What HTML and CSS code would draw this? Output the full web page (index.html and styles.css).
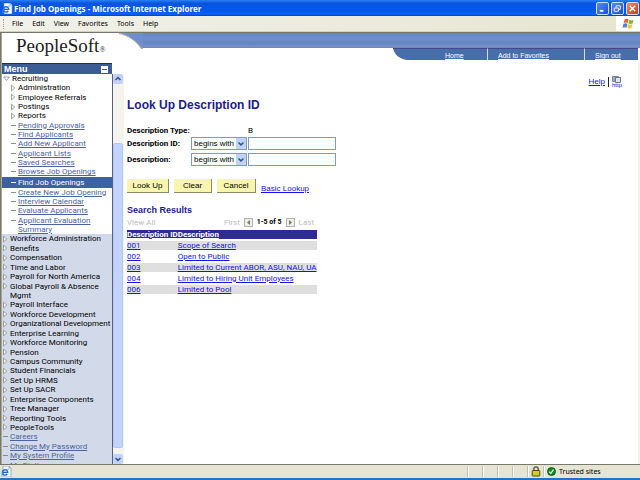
FILE: index.html
```html
<!DOCTYPE html>
<html lang="en">
<head>
  <meta charset="UTF-8" />
  <meta name="viewport" content="width=device-width, initial-scale=1.0" />
  <title>Find Job Openings</title>
  <link rel="stylesheet" href="styles.css">
</head>
<body>
  <svg class="defs" width="0" height="0" aria-hidden="true">
    <symbol id="ie" viewBox="0 0 11 11">
      <path d="M2 0h6l2 2v9H2z" fill="#fff" stroke="#7f93b8" stroke-width=".7"/>
      <path d="M8 0v2h2" fill="#c9d6ee" stroke="#7f93b8" stroke-width=".6"/>
      <path d="M1.6 6.4h5.2a2.7 2.7 0 1 0-.5 1.6" fill="none" stroke="#1c66d2" stroke-width="1.4"/>
      <path d="M.6 9.6C0 7 4 3 8.300 3" fill="none" stroke="#3aa0ee" stroke-width=".8"/>
    </symbol>
    <symbol id="closed" viewBox="0 0 5 8">
      <path d="M.5 1.200v5.600L3.800 4z" fill="#fff" stroke="#8a8a7c" stroke-width=".8"/>
    </symbol>
    <symbol id="open" viewBox="0 0 7 8">
      <path d="M.6 2h5.800L3.500 5.500z" fill="#fff" stroke="#8a8a7c" stroke-width=".8"/>
    </symbol>
    <symbol id="chevron" viewBox="0 0 10 10">
      <path d="M2.500 4 5 6.400 7.500 4" fill="none" stroke="#3c5482" stroke-width="1.500"/>
    </symbol>
  </svg>

  <header class="titlebar">
    <svg class="ie-icon" width="11" height="11"><use href="#ie"/></svg>
    <span class="window-title">Find Job Openings - Microsoft Internet Explorer</span>
    <div class="window-buttons">
      <button class="win-btn" aria-label="Minimize"><svg viewBox="0 0 12 12"><path d="M3 8.500h4" stroke="#fff" stroke-width="2"/></svg></button>
      <button class="win-btn" aria-label="Restore"><svg viewBox="0 0 12 12" fill="none" stroke="#fff"><path d="M4.500 5V3h4.500v4H7.500M2.500 5.500h4.500v3.500h-4.500z"/></svg></button>
      <button class="win-btn close" aria-label="Close"><svg viewBox="0 0 12 12"><path d="m3 3 6 6m0-6-6 6" stroke="#fff" stroke-width="1.600"/></svg></button>
    </div>
  </header>

  <div class="menubar">
    <span class="grip"></span>
    <button>File</button>
    <button>Edit</button>
    <button>View</button>
    <button>Favorites</button>
    <button>Tools</button>
    <button>Help</button>
    <div class="flag">
      <svg width="13" height="12" viewBox="0 0 13 12">
        <path d="M2.600 1.300q2-1 4 0L5.700 5q-2-.9-4 0z" fill="#e8632b"/>
        <path d="M7.300 1.700q2 1 4.300 0L10.600 5.500q-2 .9-4.200 0z" fill="#7fb83c"/>
        <path d="M1.500 5.800q2-.9 4 0l-1 3.900q-2-1-4 0z" fill="#4a83d8"/>
        <path d="M6.200 6.200q2 1 4.200 0l-1 3.900q-2 .9-4.200 0z" fill="#f4c22f"/>
      </svg>
    </div>
  </div>

  <div class="page">
    <div class="banner">
      <div class="logo">PeopleSoft<span class="reg">®</span></div>
      <svg class="swoosh" width="24" height="16" viewBox="0 0 24 16">
        <path d="M0 0h24v15h-1.500C17 8 10 2 0 0z" fill="#6f8fca"/>
        <path d="M0 .5C10 2.500 17 8 22 15.300h2" fill="none" stroke="#aaa594"/>
      </svg>
      <div class="banner-right">
        <div class="ribbon"></div>
        <nav class="tabs">
          <svg class="tab-curve" width="16" height="12" viewBox="0 0 16 12"><path d="M0 0h16v12h-2C6 11 1 6 0 0z" fill="#466ea8"/><path d="M0 .5h16" stroke="#46468c"/></svg>
          <a class="home" href="#">Home</a>
          <a class="favorites" href="#">Add to Favorites</a>
          <a class="signout" href="#">Sign out</a>
        </nav>
      </div>
    </div>

    <div class="columns">
      <aside class="sidebar">
        <div class="menu-head">
          <span>Menu</span>
          <button aria-label="Collapse menu"></button>
        </div>
        <div class="menu-body">
          <nav class="tree">
            <ul class="branch">
              <li><svg width="7" height="8"><use href="#open"/></svg><a href="#">Recruiting</a></li>
              <li class="sub"><svg width="5" height="8"><use href="#closed"/></svg><a href="#">Administration</a></li>
              <li class="sub"><svg width="5" height="8"><use href="#closed"/></svg><a href="#">Employee Referrals</a></li>
              <li class="sub"><svg width="5" height="8"><use href="#closed"/></svg><a href="#">Postings</a></li>
              <li class="sub"><svg width="5" height="8"><use href="#closed"/></svg><a href="#">Reports</a></li>
              <li class="sub leaf"><a href="#">Pending Approvals</a></li>
              <li class="sub leaf"><a href="#">Find Applicants</a></li>
              <li class="sub leaf"><a href="#">Add New Applicant</a></li>
              <li class="sub leaf"><a href="#">Applicant Lists</a></li>
              <li class="sub leaf"><a href="#">Saved Searches</a></li>
              <li class="sub leaf"><a href="#">Browse Job Openings</a></li>
              <li class="sub leaf selected"><a href="#">Find Job Openings</a></li>
              <li class="sub leaf"><a href="#">Create New Job Opening</a></li>
              <li class="sub leaf"><a href="#">Interview Calendar</a></li>
              <li class="sub leaf"><a href="#">Evaluate Applicants</a></li>
              <li class="sub leaf double"><a href="#">Applicant Evaluation<br>Summary</a></li>
            </ul>
            <ul class="roots">
              <li><svg width="5" height="8"><use href="#closed"/></svg><a href="#">Workforce Administration</a></li>
              <li><svg width="5" height="8"><use href="#closed"/></svg><a href="#">Benefits</a></li>
              <li><svg width="5" height="8"><use href="#closed"/></svg><a href="#">Compensation</a></li>
              <li><svg width="5" height="8"><use href="#closed"/></svg><a href="#">Time and Labor</a></li>
              <li><svg width="5" height="8"><use href="#closed"/></svg><a href="#">Payroll for North America</a></li>
              <li class="double"><svg width="5" height="8"><use href="#closed"/></svg><a href="#">Global Payroll &amp; Absence<br>Mgmt</a></li>
              <li><svg width="5" height="8"><use href="#closed"/></svg><a href="#">Payroll Interface</a></li>
              <li><svg width="5" height="8"><use href="#closed"/></svg><a href="#">Workforce Development</a></li>
              <li><svg width="5" height="8"><use href="#closed"/></svg><a href="#">Organizational Development</a></li>
              <li><svg width="5" height="8"><use href="#closed"/></svg><a href="#">Enterprise Learning</a></li>
              <li><svg width="5" height="8"><use href="#closed"/></svg><a href="#">Workforce Monitoring</a></li>
              <li><svg width="5" height="8"><use href="#closed"/></svg><a href="#">Pension</a></li>
              <li><svg width="5" height="8"><use href="#closed"/></svg><a href="#">Campus Community</a></li>
              <li><svg width="5" height="8"><use href="#closed"/></svg><a href="#">Student Financials</a></li>
              <li><svg width="5" height="8"><use href="#closed"/></svg><a href="#">Set Up HRMS</a></li>
              <li><svg width="5" height="8"><use href="#closed"/></svg><a href="#">Set Up SACR</a></li>
              <li><svg width="5" height="8"><use href="#closed"/></svg><a href="#">Enterprise Components</a></li>
              <li><svg width="5" height="8"><use href="#closed"/></svg><a href="#">Tree Manager</a></li>
              <li><svg width="5" height="8"><use href="#closed"/></svg><a href="#">Reporting Tools</a></li>
              <li><svg width="5" height="8"><use href="#closed"/></svg><a href="#">PeopleTools</a></li>
              <li class="leaf"><a href="#">Careers</a></li>
              <li class="leaf"><a href="#">Change My Password</a></li>
              <li class="leaf"><a href="#">My System Profile</a></li>
              <li class="leaf"><a href="#">My Dictionary</a></li>
            </ul>
          </nav>
          <div class="scrollbar">
            <svg class="arrow up" width="10" height="10"><use href="#chevron"/></svg>
            <div class="track">
              <div class="before"></div>
              <div class="thumb"></div>
              <div class="after"></div>
            </div>
            <svg class="arrow" width="10" height="10"><use href="#chevron"/></svg>
          </div>
        </div>
      </aside>

      <main class="content">
        <div class="help">
          <a href="#">Help</a>
          <span class="bar"></span>
          <a class="http" href="#" aria-label="New window">
            <svg width="10" height="7" viewBox="0 0 10 7"><path d="M.5 .5h6v5h-6z" fill="#9aacc0" stroke="#7b8794"/><path d="M3.500 1.500h5v5h-5z" fill="#dfe5ea" stroke="#6d7780"/></svg>
            <span>http</span>
          </a>
        </div>

        <h1>Look Up Description ID</h1>
        <form class="lookup">
          <div class="row type-row">
            <span class="label">Description Type:</span>
            <span class="value">B</span>
          </div>
          <div class="row">
            <label class="label" for="desc_id">Description ID:</label>
            <div class="select">
              <select aria-label="Description ID operator"><option>begins with</option></select>
              <svg width="10" height="10"><use href="#chevron"/></svg>
            </div>
            <input type="text" id="desc_id">
          </div>
          <div class="row">
            <label class="label" for="desc">Description:</label>
            <div class="select">
              <select aria-label="Description operator"><option>begins with</option></select>
              <svg width="10" height="10"><use href="#chevron"/></svg>
            </div>
            <input type="text" id="desc">
          </div>
          <div class="actions">
            <button type="button">Look Up</button>
            <button type="button">Clear</button>
            <button type="button">Cancel</button>
            <a href="#">Basic Lookup</a>
          </div>
        </form>

        <section class="results">
          <h2>Search Results</h2>
          <div class="pager">
            <span class="view-all">View All</span>
            <span>First</span>
            <button aria-label="Previous"><svg width="7" height="7" viewBox="0 0 7 7"><path d="M5 1v5L2 3.500z" fill="#777"/></svg></button>
            <strong>1-5 of 5</strong>
            <button aria-label="Next"><svg width="7" height="7" viewBox="0 0 7 7"><path d="M2 1v5l3-2.500z" fill="#777"/></svg></button>
            <span>Last</span>
          </div>
          <table>
            <thead>
              <tr><th><a href="#">Description ID</a></th><th><a href="#">Description</a></th></tr>
            </thead>
            <tbody>
              <tr><td><a href="#">001</a></td><td><a href="#">Scope of Search</a></td></tr>
              <tr><td><a href="#">002</a></td><td><a href="#">Open to Public</a></td></tr>
              <tr><td><a href="#">003</a></td><td><a href="#">Limited to Current ABOR, ASU, NAU, UA</a></td></tr>
              <tr><td><a href="#">004</a></td><td><a href="#">Limited to Hiring Unit Employees</a></td></tr>
              <tr><td><a href="#">006</a></td><td><a href="#">Limited to Pool</a></td></tr>
            </tbody>
          </table>
        </section>
      </main>
    </div>
  </div>

  <footer class="statusbar">
    <svg class="ie-icon" width="11" height="11"><use href="#ie"/></svg>
    <div class="cells">
      <span class="cell"></span>
      <span class="cell"></span>
      <span class="cell"></span>
      <span class="cell"></span>
      <span class="cell lock">
        <svg width="10" height="11" viewBox="0 0 10 11"><path d="M2.800 5V3a2.200 2.200 0 0 1 4.400 0v2" fill="none" stroke="#55553a" stroke-width="1.300"/><rect x="1.200" y="4.500" width="7.600" height="5.500" rx=".5" fill="#d8cc1c" stroke="#4d4a14"/></svg>
      </span>
      <span class="cell zone">
        <svg width="9" height="9" viewBox="0 0 9 9"><circle cx="4.500" cy="4.500" r="4" fill="#128a1c" stroke="#0b4d10" stroke-width=".8"/><path d="m2.200 4.600 1.700 1.800L6.500 2.500" fill="none" stroke="#fff" stroke-width="1.200"/></svg>
        Trusted sites
      </span>
    </div>
  </footer>
</body>
</html>
```
FILE: styles.css
```css
* {
  box-sizing: border-box;
}
body {
  margin: 0;
  height: 100vh;
  display: flex;
  flex-direction: column;
  overflow: hidden;
  font-family: Roboto, "Liberation Sans", sans-serif;
  font-size: 8px;
  line-height: 9px;
  color: #000;
  background: #fff;
}
svg {
  display: block;
  flex: none;
}
.defs {
  position: absolute;
}
button {
  font-family: inherit;
  font-size: inherit;
  line-height: inherit;
  padding: 0;
  border: none;
  color: inherit;
}
h1,
h2 {
  margin: 0;
  font-family: "Liberation Sans", Arial, sans-serif;
  color: #1c1c8c;
}
ul {
  margin: 0;
  padding: 0;
  list-style: none;
}

/* window chrome */
.titlebar {
  flex: none;
  display: flex;
  align-items: center;
  height: 16px;
  padding: 0 1px 0 2px;
  gap: 1px;
  background: linear-gradient(#2a80f5, #0a55e0 20%, #0358ec 70%, #0a62fa 88%, #0040c0);
  color: #fff;
}
.window-title {
  flex: 1;
  font-family: "Open Sans", sans-serif;
  font-size: 8px;
  font-weight: bold;
}
.window-buttons {
  display: flex;
  gap: 2px;
}
.win-btn {
  width: 13px;
  height: 13px;
  border: 1px solid #cfdcf8;
  border-radius: 2px;
  background: linear-gradient(135deg, #5a8cf0, #1a4fd0);
}
.win-btn.close {
  background: linear-gradient(135deg, #ee8a68, #cc3a14);
}
.menubar {
  flex: none;
  display: flex;
  align-items: center;
  gap: 9px;
  height: 16px;
  padding-left: 3px;
  background: linear-gradient(90deg, #f2f1ea, #e6e5d2);
  border-bottom: 1px solid #d5d2bd;
  font-family: "Noto Sans", sans-serif;
  font-size: 7px;
}
.menubar button {
  background: none;
}
.grip {
  width: 0;
  height: 10px;
  margin-right: -1px;
  border-left: 1px dotted #a5a292;
}
.flag {
  display: flex;
  align-items: center;
  justify-content: center;
  width: 24px;
  height: 15px;
  margin-left: auto;
  background: #fff;
}

/* banner */
.page {
  flex: 1;
  min-height: 0;
  display: flex;
  flex-direction: column;
  border: solid #77776c;
  border-width: 1px 0 1px 1px;
  box-shadow: inset 1px 0 #aaa799;
}
.banner {
  flex: none;
  display: flex;
  height: 30px;
}
.logo {
  width: 118px;
  padding-left: 15px;
  font-family: "Liberation Serif", serif;
  font-size: 19px;
  line-height: 26px;
  color: #1c1c1c;
  white-space: nowrap;
}
.reg {
  font-size: 8px;
}
.banner-right {
  flex: 1;
}
.ribbon {
  height: 15px;
  background: linear-gradient(#6684be, #7090cc 40%, #6485c0 70%, #7391cc);
  border-bottom: 1px solid #8581a8;
}
.tabs {
  display: flex;
  width: fit-content;
  margin-left: auto;
  margin-right: 2px;
  color: #fff;
  font-family: "Liberation Sans", Arial, sans-serif;
  font-size: 7px;
}
.tabs a {
  height: 12px;
  padding-top: 2px;
  color: #fff;
  background: #466ea8;
  border-top: 1px solid #46468c;
}
.tabs .home {
  width: 78px;
  padding-left: 36px;
}
.tabs .favorites {
  width: 97px;
  padding-left: 10px;
  border-left: 1px solid #d5def0;
}
.tabs .signout {
  width: 54px;
  padding-left: 10px;
  border-left: 1px solid #d5def0;
}

/* menu tree */
.columns {
  flex: 1;
  min-height: 0;
  display: flex;
}
.sidebar {
  flex: none;
  display: flex;
  flex-direction: column;
  width: 123px;
  padding-left: 1px;
}
.menu-head {
  flex: none;
  display: flex;
  align-items: center;
  justify-content: space-between;
  width: 110px;
  height: 11px;
  padding: 0 4px 0 2px;
  background: #3c5c96;
  border-top: 1px solid #1e2e5c;
  color: #fff;
  font-family: "Liberation Sans", Arial, sans-serif;
  font-size: 9px;
  font-weight: bold;
}
.menu-head button {
  width: 7px;
  height: 7px;
  border: solid #fff;
  border-width: 3px 1px;
  background: #3c5c96;
}
.menu-body {
  flex: 1;
  min-height: 0;
  display: flex;
}
.tree {
  width: 111px;
  display: flex;
  flex-direction: column;
  overflow: hidden;
  border-right: 1px solid #55607c;
  background: #d2d9e8;
}
.tree ul {
  display: flex;
  flex-direction: column;
  padding-left: 1px;
}
.tree .branch {
  flex: 17 1 0;
  background: #fff;
}
.tree .roots {
  flex: 25 1 0;
  margin-bottom: -6px;
}
.tree li {
  flex: 1 1 0;
  display: flex;
  align-items: center;
  gap: 2px;
  white-space: nowrap;
}
.tree li.double {
  flex: 2 1 0;
}
.tree .double svg {
  margin-bottom: 9px;
}
.tree a {
  color: #000;
  text-decoration: none;
}
.branch .sub {
  padding-left: 8px;
}
.tree .leaf::before {
  content: "";
  width: 5px;
  height: 1px;
  background: #8c8c80;
}
.tree .double.leaf::before {
  margin-bottom: 9px;
}
.tree .leaf a {
  color: #4a64a0;
  text-decoration: underline;
}
.tree .leaf.selected {
  flex: none;
  height: 11px;
  margin-left: -1px;
  padding-left: 9px;
  background: #3c62a4;
}
.tree .leaf.selected a {
  color: #fff;
  text-decoration: none;
}
.tree .leaf.selected::before {
  background: #fff;
}
.scrollbar {
  flex: 1;
  display: flex;
  flex-direction: column;
  padding: 0 1px 0 0;
  background: #f4f3ee;
}
.arrow {
  border-radius: 2px;
  background: #c1d3fb;
}
.arrow.up {
  transform: rotate(180deg);
}
.track {
  flex: 1;
  display: flex;
  flex-direction: column;
}
.track .before {
  flex: 59;
}
.track .thumb {
  flex: 304;
  border: 1px solid #b4c8f4;
  border-radius: 2px;
  background: #c3d4fc;
}
.track .after {
  flex: 6;
}

/* lookup page */
.content {
  flex: 1;
  padding: 12px 16px 0 3px;
  border-right: 2px solid #f1f1ee;
}
.content a {
  color: #1414e6;
}
.help {
  display: flex;
  justify-content: flex-end;
  align-items: center;
  gap: 3px;
  height: 13px;
}
.help a {
  font-family: "Liberation Sans", Arial, sans-serif;
}
.help .bar {
  width: 1px;
  height: 10px;
  background: #222;
}
.content .http {
  font-size: 6px;
  line-height: 5px;
  text-decoration: none;
}
h1 {
  margin-top: 9px;
  font-size: 12px;
  line-height: 16px;
}
.lookup {
  margin-top: 13px;
}
.row {
  display: flex;
  align-items: center;
  height: 13px;
  margin-bottom: 3px;
}
.type-row {
  height: 9px;
  margin-bottom: 2px;
}
.label {
  width: 64px;
  font-weight: bold;
  white-space: nowrap;
}
.type-row .value {
  margin-left: 57px;
}
.select {
  position: relative;
  width: 56px;
}
.select select {
  display: block;
  width: 100%;
  height: 13px;
  padding: 0 0 0 2px;
  appearance: none;
  border: 1px solid #7f9db9;
  border-radius: 0;
  background: #fff;
  color: #000;
  font-family: "Liberation Sans", Arial, sans-serif;
  font-size: 8px;
}
.select svg {
  position: absolute;
  top: 1px;
  right: 1px;
  height: 11px;
  background: #c1d3fb;
  pointer-events: none;
}
.row input {
  width: 88px;
  height: 13px;
  margin-left: 1px;
  padding: 0 2px;
  border: 1px solid #7f9db9;
  font-family: inherit;
  font-size: 8px;
}
.actions {
  display: flex;
  align-items: center;
  gap: 5px;
  margin-top: 13px;
}
.actions button {
  width: 42px;
  height: 14px;
  border-right: 1px solid #8c8a64;
  border-bottom: 1px solid #8c8a64;
  background: #f8f6ac;
  font-family: "Liberation Sans", Arial, sans-serif;
}
.actions button:nth-child(2) {
  width: 38px;
}
.actions button:nth-child(3) {
  width: 39px;
}
.actions a {
  margin-top: 4px;
  font-family: "Liberation Sans", Arial, sans-serif;
}
.results {
  width: 187px;
  margin-top: 12px;
}
h2 {
  font-size: 9px;
  line-height: 11px;
}
.pager {
  display: flex;
  align-items: center;
  gap: 4px;
  height: 13px;
  color: #bcbcbc;
}
.pager .view-all {
  flex: 1;
}
.pager strong {
  color: #000;
  font-size: 7px;
}
.pager button {
  width: 9px;
  height: 9px;
  border: 1px solid #b4b4aa;
  background: #f0efe6;
}
.results table {
  width: 100%;
  border-collapse: separate;
  border-spacing: 0 2px;
  margin-top: -1px;
}
.results th,
.results td {
  height: 9px;
  padding: 0;
  text-align: left;
  white-space: nowrap;
}
.results th:first-child {
  width: 51px;
}
.results th {
  background: #2c2c94;
}
.results th a {
  color: #fff;
}
.results tbody tr:nth-child(odd) td {
  background: #dfdfdf;
}

/* status bar */
.statusbar {
  flex: none;
  display: flex;
  align-items: center;
  justify-content: space-between;
  height: 15px;
  padding-left: 1px;
  background: #e6e5d3;
  border-bottom: 2px solid #2a6fc4;
}
.cells {
  display: flex;
}
.cell {
  display: flex;
  align-items: center;
  width: 15px;
  height: 11px;
  border-left: 1px solid #c2bfac;
  box-shadow: inset 1px 0 #fff;
}
.cell.lock {
  width: 16px;
  justify-content: center;
}
.cell.zone {
  width: 97px;
  padding-left: 3px;
  gap: 3px;
  font-family: "Noto Sans", sans-serif;
  font-size: 7px;
}
```
